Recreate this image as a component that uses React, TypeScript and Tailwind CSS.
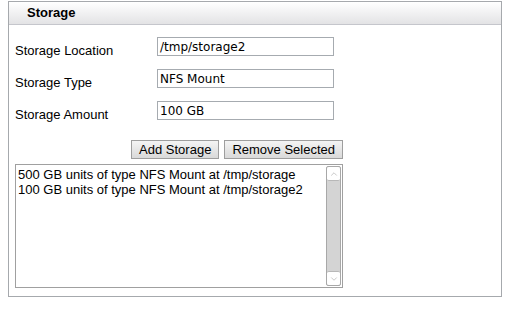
import { ChevronUp, ChevronDown } from "lucide-react";

const fields = [
  { label: "Storage Location", value: "/tmp/storage2" },
  { label: "Storage Type", value: "NFS Mount" },
  { label: "Storage Amount", value: "100 GB" },
];

const items = [
  "500 GB units of type NFS Mount at /tmp/storage",
  "100 GB units of type NFS Mount at /tmp/storage2",
];

export default function App() {
  return (
    <div className="w-[510px] h-[315px] bg-white pt-px pl-2 font-['Liberation_Sans',Arial,sans-serif] text-[13px] text-black">
      <div className="w-[494px] h-[296px] border border-[#a6a9ad] flex flex-col">
        <div className="h-[23px] border-b border-[#c5c6cc] bg-gradient-to-b from-white to-[#e3e3e5] pl-[18px] flex items-center font-bold leading-none pb-[2px]">
          Storage
        </div>

        <div className="pl-[6px] pt-[12px] flex flex-col gap-[13px]">
          {fields.map((f) => (
            <div key={f.label} className="flex items-center h-[19px]">
              <div className="w-[142px] pt-[9px]">{f.label}</div>
              <div className="w-[177px] h-[19px] border border-[#a6abb0] px-[2px] flex items-center font-['DejaVu_Sans',sans-serif] text-[12px] leading-none">
                {f.value}
              </div>
            </div>
          ))}
        </div>

        <div className="pl-[6px] mt-[20px] w-[334px] flex justify-end gap-[5px]">
          <button className="h-[19px] px-[7px] border border-[#9e9e9e] bg-gradient-to-b from-[#f4f4f4] to-[#d9d9d9] leading-none">
            Add Storage
          </button>
          <button className="h-[19px] px-[7px] border border-[#9e9e9e] bg-gradient-to-b from-[#f4f4f4] to-[#d9d9d9] leading-none">
            Remove Selected
          </button>
        </div>

        <div className="ml-[6px] mt-[5px] w-[328px] h-[124px] border border-[#a0a0a0] flex">
          <div className="flex-1 pl-[2px] pt-[2px] leading-[15px]">
            {items.map((t) => (
              <div key={t}>{t}</div>
            ))}
          </div>
          <div className="w-[15px] my-px mr-px bg-[#d4d4d4] border border-[#a8a8a8] rounded-[2px] flex flex-col justify-between">
            <div className="h-[14px] bg-white border-b border-[#b8b8b8] rounded-[2px] flex items-center justify-center">
              <ChevronUp size={10} strokeWidth={1.5} color="#a8a8a8" />
            </div>
            <div className="h-[14px] bg-white border-t border-[#b8b8b8] rounded-[2px] flex items-center justify-center">
              <ChevronDown size={10} strokeWidth={1.5} color="#a8a8a8" />
            </div>
          </div>
        </div>
      </div>
    </div>
  );
}
